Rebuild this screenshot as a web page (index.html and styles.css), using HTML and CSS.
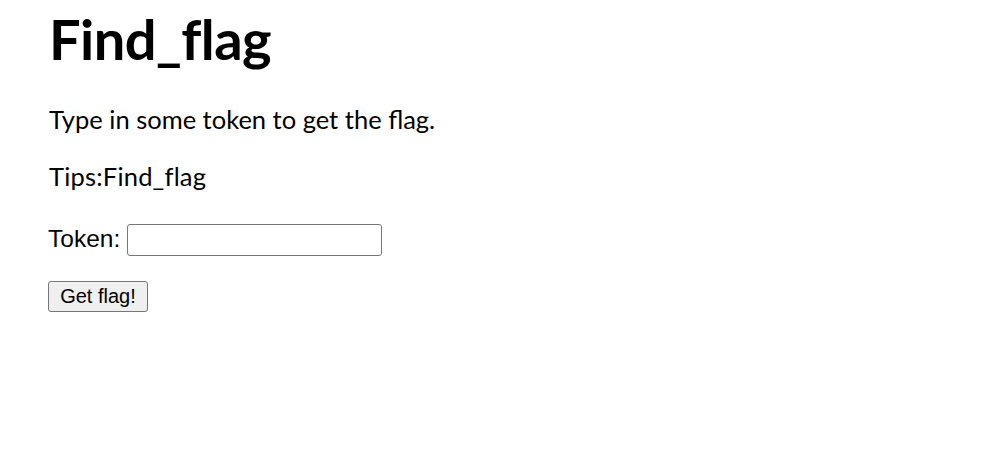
FILE: index.html
```html
<!DOCTYPE html>
<html>
<head>
<meta charset="utf-8">
<title>Find_flag</title>
<link rel="stylesheet" href="styles.css">
</head>
<body>
<main class="page">
  <h1 class="title">Find_flag</h1>
  <p class="text intro">Type in some token to get the flag.</p>
  <p class="text tips">Tips:Find_flag</p>
  <form class="form" onsubmit="return false">
    <div class="row">
      <label class="label" for="token">Token:</label>
      <input class="input" id="token" type="text">
    </div>
    <button class="btn" type="submit">Get flag!</button>
  </form>
</main>
</body>
</html>
```
FILE: styles.css
```css
html, body {
  margin: 0;
  padding: 0;
  background: #ffffff;
  color: #000000;
}
.page {
  padding: 9px 0 0 49px;
  font-family: Lato, "Noto Sans", sans-serif;
}
.title {
  margin: 0;
  font-size: 56px;
  line-height: 60px;
  font-weight: 700;
  letter-spacing: -0.6px;
}
.text {
  margin: 0;
  font-size: 25.5px;
  line-height: 36px;
  font-weight: 400;
}
.intro {
  margin-top: 32px;
}
.tips {
  margin-top: 21px;
  letter-spacing: 0.2px;
}
.form {
  margin-top: 30px;
  margin-left: -1px;
  font-family: "Liberation Sans", Arial, sans-serif;
}
.row {
  display: flex;
  align-items: flex-start;
  gap: 7px;
}
.label {
  font-family: "Liberation Sans", Arial, sans-serif;
  font-size: 24.5px;
  line-height: 27px;
  margin-top: 1px;
}
.input {
  box-sizing: border-box;
  width: 255px;
  height: 32px;
  margin: 0;
  padding: 1px 3px;
  border: 1px solid #767676;
  border-radius: 3px;
  background: #ffffff;
  font-family: "Liberation Sans", Arial, sans-serif;
  font-size: 20px;
}
.btn {
  display: block;
  box-sizing: border-box;
  width: 100px;
  height: 31px;
  margin: 25px 0 0 0;
  padding: 0;
  border: 1px solid #767676;
  border-radius: 3px;
  background: #efefef;
  color: #000000;
  font-family: "Liberation Sans", Arial, sans-serif;
  font-size: 20px;
  line-height: 27px;
}
```
